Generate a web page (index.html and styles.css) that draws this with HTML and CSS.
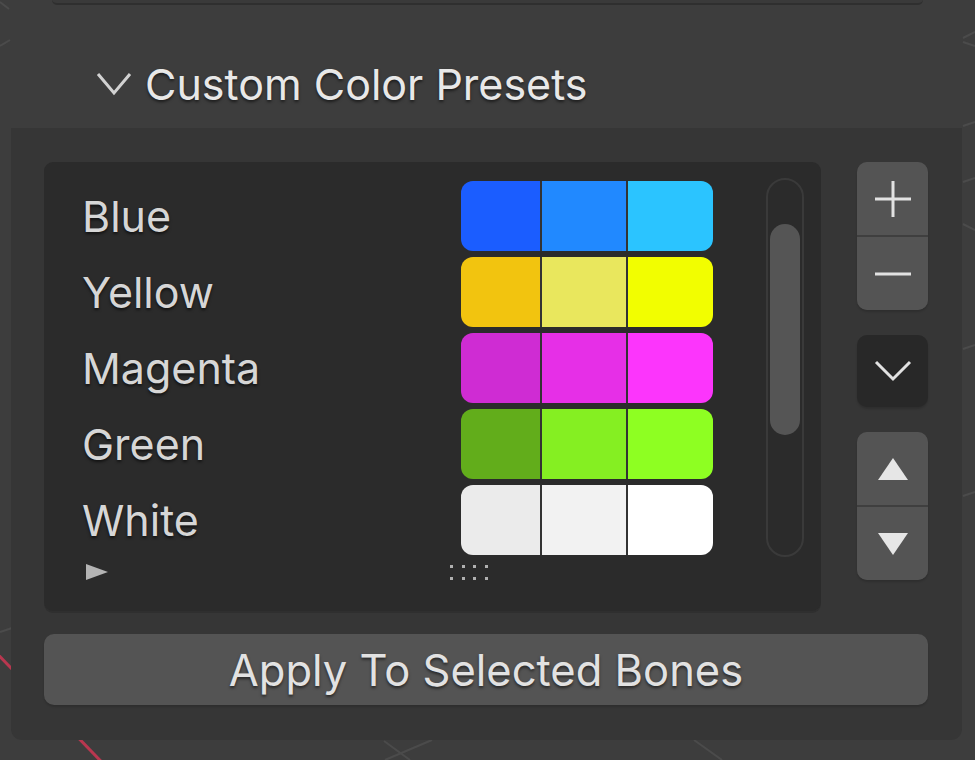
FILE: index.html
```html
<!DOCTYPE html>
<html>
<head>
<meta charset="utf-8">
<link rel="stylesheet" href="styles.css">
</head>
<body>
<svg class="viewport" width="975" height="760" viewBox="0 0 975 760">
  <g stroke="#4b4b4b" stroke-width="2" fill="none">
    <path d="M0 2 L9 9"/>
    <path d="M0 46 L10 40"/>
    <path d="M0 632 L12 628"/>
    <path d="M963 38 L975 32"/>
    <path d="M963 42 L975 46"/>
    <path d="M963 126 L975 122"/>
    <path d="M963 182 L975 178"/>
    <path d="M963 224 L975 230"/>
    <path d="M963 349 L975 345"/>
    <path d="M963 496 L975 492"/>
    <path d="M385 760 L432 740"/>
    <path d="M384 741 L410 760"/>
    <path d="M694 740 L722 760"/>
  </g>
  <path d="M-20 636 L120 781" stroke="#b8374f" stroke-width="3"/>
</svg>

<div class="topfield"></div>

<div class="header">
  <svg class="hchev" width="36" height="28" viewBox="0 0 36 28">
    <polyline points="2,4 18,23 34,4" fill="none" stroke="#d2d2d2" stroke-width="3" stroke-linejoin="miter"/>
  </svg>
  <span class="title">Custom Color Presets</span>
</div>

<div class="panel">
  <div class="main">
    <div class="list">
      <div class="entries">
        <div class="entry">
          <span class="name">Blue</span>
          <div class="swatch">
            <span class="cell c1" style="background:#1b5dff"></span>
            <span class="cell c2" style="background:#2189ff"></span>
            <span class="cell c3" style="background:#2bc4ff"></span>
          </div>
        </div>
        <div class="entry">
          <span class="name">Yellow</span>
          <div class="swatch">
            <span class="cell c1" style="background:#f2c40f"></span>
            <span class="cell c2" style="background:#e9e75d"></span>
            <span class="cell c3" style="background:#f2fe00"></span>
          </div>
        </div>
        <div class="entry">
          <span class="name">Magenta</span>
          <div class="swatch">
            <span class="cell c1" style="background:#cf2cd3"></span>
            <span class="cell c2" style="background:#e62fe7"></span>
            <span class="cell c3" style="background:#fc35fc"></span>
          </div>
        </div>
        <div class="entry">
          <span class="name">Green</span>
          <div class="swatch">
            <span class="cell c1" style="background:#62ad1b"></span>
            <span class="cell c2" style="background:#85ef22"></span>
            <span class="cell c3" style="background:#8eff22"></span>
          </div>
        </div>
        <div class="entry">
          <span class="name">White</span>
          <div class="swatch">
            <span class="cell c1" style="background:#ebebeb"></span>
            <span class="cell c2" style="background:#f2f2f2"></span>
            <span class="cell c3" style="background:#ffffff"></span>
          </div>
        </div>
        <div class="footer">
          <svg class="expand" width="24" height="18" viewBox="0 0 24 18">
            <polygon points="1,1 23,9 1,17" fill="#b4b4b4"/>
          </svg>
          <svg class="grip" width="44" height="18" viewBox="0 0 44 18">
            <g fill="#b0b0b0">
              <rect x="1" y="2" width="3" height="3"/>
              <rect x="13" y="2" width="3" height="3"/>
              <rect x="24" y="2" width="3" height="3"/>
              <rect x="36" y="2" width="3" height="3"/>
              <rect x="1" y="14" width="3" height="3"/>
              <rect x="13" y="14" width="3" height="3"/>
              <rect x="24" y="14" width="3" height="3"/>
              <rect x="36" y="14" width="3" height="3"/>
            </g>
          </svg>
        </div>
      </div>
      <div class="scroll">
        <div class="thumb"></div>
      </div>
    </div>

    <div class="side">
      <div class="group">
        <div class="btn">
          <svg width="40" height="40" viewBox="0 0 40 40">
            <path d="M2 20 H38 M20 2 V38" stroke="#e2e2e2" stroke-width="3" fill="none"/>
          </svg>
        </div>
        <div class="btn">
          <svg width="40" height="40" viewBox="0 0 40 40">
            <path d="M2 20 H38" stroke="#e2e2e2" stroke-width="3" fill="none"/>
          </svg>
        </div>
      </div>
      <div class="btn single dark">
        <svg width="40" height="28" viewBox="0 0 40 28">
          <polyline points="3,5 20,22 37,5" fill="none" stroke="#e2e2e2" stroke-width="3"/>
        </svg>
      </div>
      <div class="group">
        <div class="btn">
          <svg width="34" height="26" viewBox="0 0 34 26">
            <polygon points="17,2 32,24 2,24" fill="#e6e6e6"/>
          </svg>
        </div>
        <div class="btn">
          <svg width="34" height="26" viewBox="0 0 34 26">
            <polygon points="2,2 32,2 17,24" fill="#e6e6e6"/>
          </svg>
        </div>
      </div>
    </div>
  </div>

  <div class="apply">Apply To Selected Bones</div>
</div>
</body>
</html>
```

FILE: styles.css
```css
html, body {
  margin: 0;
  padding: 0;
}

body {
  width: 975px;
  height: 760px;
  overflow: hidden;
  background: #3d3d3d;
  position: relative;
  font-family: Inter, "Noto Sans", sans-serif;
}

.viewport {
  position: absolute;
  left: 0;
  top: 0;
}

.topfield {
  position: relative;
  margin-left: 52px;
  width: 871px;
  height: 3px;
  background: #3a3a3a;
  border-bottom: 2px solid #2f2f2f;
  border-radius: 0 0 6px 6px;
}

.header {
  position: relative;
  height: 123px;
  box-sizing: border-box;
  padding-top: 35px;
  padding-left: 96px;
  display: flex;
  align-items: center;
}

.hchev {
  margin-right: 13px;
  flex: none;
}

.title {
  font-size: 43px;
  color: #e8e8e8;
  text-shadow: 0 2px 3px rgba(0, 0, 0, 0.55);
  white-space: nowrap;
}

.panel {
  position: relative;
  margin-left: 11px;
  width: 951px;
  height: 612px;
  box-sizing: border-box;
  background: #363636;
  border-radius: 0 0 11px 11px;
  padding: 34px 0 0 33px;
}

.main {
  display: flex;
  align-items: flex-start;
}

.list {
  width: 777px;
  height: 449px;
  box-sizing: border-box;
  background: #2b2b2b;
  border-radius: 9px;
  box-shadow: 0 2px 0 #2f2f2f;
  padding-left: 38px;
  display: flex;
  align-items: flex-start;
}

.entries {
  width: 631px;
  padding-top: 19px;
}

.entry {
  display: flex;
  align-items: center;
  height: 70px;
  margin-bottom: 6px;
}

.name {
  width: 379px;
  font-size: 43px;
  color: #d6d6d6;
  text-shadow: 0 2px 3px rgba(0, 0, 0, 0.6);
  white-space: nowrap;
}

.swatch {
  width: 252px;
  height: 70px;
  display: flex;
  gap: 2px;
  background: #333333;
  border-radius: 12px;
  overflow: hidden;
}

.cell {
  display: block;
  height: 100%;
}

.c1 { width: 79px; }
.c2 { width: 84px; }
.c3 { flex: 1; }

.footer {
  display: flex;
  align-items: center;
  height: 18px;
  margin-top: 8px;
  padding-left: 3px;
}

.grip {
  margin-left: 340px;
}

.scroll {
  margin-left: 53px;
  margin-top: 16px;
  width: 38px;
  height: 379px;
  box-sizing: border-box;
  border: 2px solid #3a3a3a;
  border-radius: 19px;
  padding: 44px 0 0 2px;
}

.thumb {
  width: 30px;
  height: 211px;
  background: #555555;
  border-radius: 15px;
}

.side {
  margin-left: 36px;
  width: 71px;
  display: flex;
  flex-direction: column;
  gap: 25px;
}

.group {
  display: flex;
  flex-direction: column;
  gap: 2px;
  background: #3f3f3f;
  border-radius: 10px;
  overflow: hidden;
  box-shadow: 0 2px 2px rgba(0, 0, 0, 0.15);
}

.btn {
  height: 73px;
  background: #545454;
  display: flex;
  align-items: center;
  justify-content: center;
}

.btn.single {
  height: 72px;
  border-radius: 10px;
  box-shadow: 0 2px 2px rgba(0, 0, 0, 0.15);
}

.btn.dark {
  background: #282828;
}

.apply {
  margin-top: 23px;
  width: 884px;
  height: 71px;
  background: #545454;
  border-radius: 10px;
  box-shadow: 0 2px 2px rgba(0, 0, 0, 0.15);
  display: flex;
  align-items: center;
  justify-content: center;
  font-size: 43.5px;
  color: #e2e2e2;
  text-shadow: 0 2px 3px rgba(0, 0, 0, 0.55);
  white-space: nowrap;
}
```
